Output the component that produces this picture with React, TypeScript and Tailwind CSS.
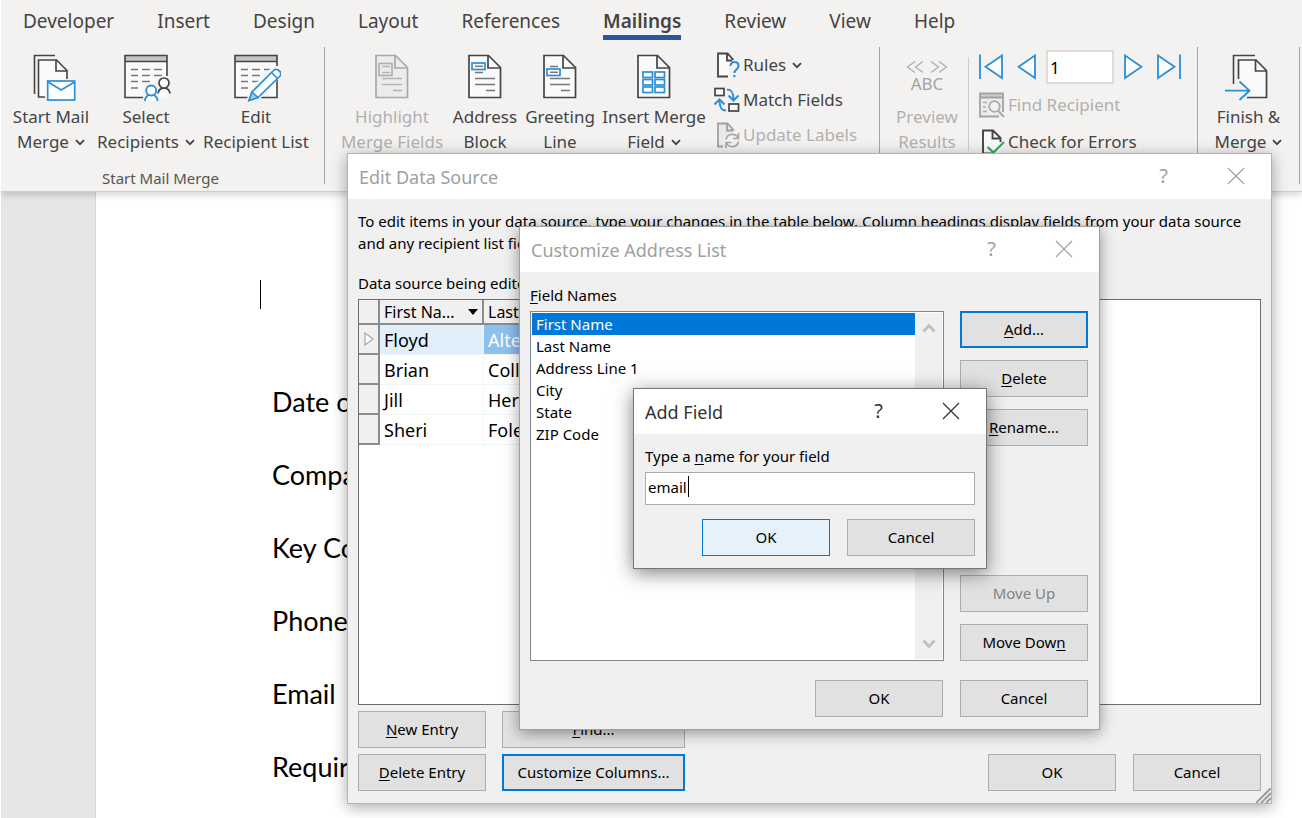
import React from "react";

const INK = "#444444";
const BLUE = "#2b8fd6";
const DIM = "#b1b0af";

function Chevron() {
  return (
    <svg width="10" height="7" viewBox="0 0 10 7" className="mb-0.5 ml-1.5 inline-block align-middle" aria-hidden="true">
      <path d="M1 1.2 L5 5.2 L9 1.2" fill="none" stroke={INK} strokeWidth="1.8" />
    </svg>
  );
}

function StartMergeIcon() {
  return (
    <svg width="52" height="48" viewBox="-8 0 52 48" aria-hidden="true">
      <path d="M1.5 40 V1.5 H22" fill="none" stroke={INK} strokeWidth="1.6" />
      <path d="M5.5 43 V6 H23.5 L34 16.5 V26 H14 V43 Z" fill="#fafafa" />
      <path d="M12 43 H5.5 V6 H23.5 L34 16.5 V25 M23 6 V17 H34" fill="none" stroke={INK} strokeWidth="1.6" />
      <rect x="14.7" y="27" width="27" height="19" fill="#fff" stroke={BLUE} strokeWidth="1.7" />
      <path d="M15 28 L28.2 36 L41.5 28" fill="none" stroke={BLUE} strokeWidth="1.7" />
    </svg>
  );
}

function SheetBase() {
  return (
    <>
      <rect x="2" y="1.5" width="42" height="42" fill="#fafafa" />
      <rect x="2" y="1.5" width="42" height="6" fill="#c3c3c3" />
      <path d="M2 7.5 H44" stroke={INK} strokeWidth="1.6" />
      <path
        d="M8 15.5 h7 M19 15.5 h8 M31 15.5 h8 M8 21.5 h7 M19 21.5 h8 M31 21.5 h8 M8 27.5 h7 M19 27.5 h8 M8 34 h7"
        stroke="#777"
        strokeWidth="1.5"
      />
    </>
  );
}

function RecipientsIcon() {
  return (
    <svg width="50" height="48" viewBox="-2 0 50 48" aria-hidden="true">
      <SheetBase />
      <path d="M44 22 V1.5 H2 V43.5 H20" fill="none" stroke={INK} strokeWidth="1.6" />
      <circle cx="40.5" cy="30" r="8" fill="#f3f2f1" />
      <circle cx="28" cy="38" r="8.5" fill="#f3f2f1" />
      <g fill="#fafafa" stroke={INK} strokeWidth="1.7">
        <path d="M35 39.5 C36 32.5 46 32 47 39.5" />
        <circle cx="41" cy="29" r="5" />
      </g>
      <g fill="#fff" stroke={BLUE} strokeWidth="1.8">
        <path d="M21.8 47 C23 38.5 33.5 38.5 34.7 47" />
        <circle cx="28.2" cy="36.5" r="5" />
      </g>
    </svg>
  );
}

function EditListIcon() {
  return (
    <svg width="50" height="48" viewBox="-2 0 50 48" aria-hidden="true">
      <SheetBase />
      <path d="M44 12 V1.5 H2 V43.5 H15 M28 43.5 H44 V25" fill="none" stroke={INK} strokeWidth="1.6" />
      <path d="M13 48 L17 35 L39 13 L48 13 L48 22 L26 46 Z" fill="#f5f5f4" />
      <path
        d="M16 46.5 L19 38 L40.5 16.5 C43 13.5 50 17.5 47 22 L25 43.5 Z"
        fill="#fff"
        stroke={BLUE}
        strokeWidth="1.7"
      />
      <path d="M16 46.5 L19 38 L25 43.5 Z" fill="#9ccbee" stroke={BLUE} strokeWidth="1.5" />
      <path d="M38.5 18.5 L44.5 24.5" stroke={BLUE} strokeWidth="1.6" />
    </svg>
  );
}

function Document({ tone, fill, children }: { tone: string; fill: string; children: React.ReactNode }) {
  return (
    <svg width="36" height="48" viewBox="0 0 36 48" aria-hidden="true">
      <path d="M2 1.5 H21.5 L33.5 13.5 V43.5 H2 Z" fill={fill} stroke={tone} strokeWidth="1.7" />
      <path d="M21 1.5 V14 H33.5" fill="none" stroke={tone} strokeWidth="1.7" />
      {children}
    </svg>
  );
}

function HighlightIcon() {
  return (
    <Document tone="#a8a8a8" fill="#ececec">
      <path d="M8 12.5 h8 M8 18.5 h8 M8 24.5 h20 M8 30.5 h20 M19 36.5 h9" stroke="#b4b4b4" strokeWidth="1.6" />
      <rect x="5" y="9.5" width="13" height="12" fill="none" stroke="#adadad" strokeWidth="1.6" />
    </Document>
  );
}

function AddressIcon() {
  return (
    <Document tone={INK} fill="#fafafa">
      <path d="M8 18.5 h8 M8 24.5 h20 M8 30.5 h20 M19 36.5 h9" stroke="#777" strokeWidth="1.6" />
      <rect x="5" y="9" width="13" height="6.5" fill="#fff" stroke={BLUE} strokeWidth="1.7" />
      <path d="M8 12.3 h8" stroke="#777" strokeWidth="1.5" />
    </Document>
  );
}

function GreetingIcon() {
  return (
    <Document tone={INK} fill="#fafafa">
      <path d="M8 12.5 h8 M8 24.5 h20 M8 30.5 h20 M19 36.5 h9" stroke="#777" strokeWidth="1.6" />
      <rect x="5" y="15" width="13" height="6.5" fill="#fff" stroke={BLUE} strokeWidth="1.7" />
      <path d="M8 18.3 h8" stroke="#777" strokeWidth="1.5" />
    </Document>
  );
}

function InsertFieldIcon() {
  return (
    <Document tone={INK} fill="#fafafa">
      <g fill="#fff" stroke={BLUE} strokeWidth="1.7">
        <rect x="7" y="18" width="9.5" height="5.5" />
        <rect x="19" y="18" width="9.5" height="5.5" />
        <rect x="7" y="25.5" width="9.5" height="5.5" />
        <rect x="19" y="25.5" width="9.5" height="5.5" />
        <rect x="7" y="33" width="9.5" height="5.5" />
        <rect x="19" y="33" width="9.5" height="5.5" />
      </g>
    </Document>
  );
}

function RulesIcon() {
  return (
    <svg width="26" height="26" viewBox="0 0 26 26" aria-hidden="true">
      <path d="M4 1.5 H13.5 L19 8 V24.5 H4 Z" fill="#fafafa" />
      <path d="M14 24.5 H4 V1.5 H13.5 L19.5 8 M13 1.5 V8.5 H18" fill="none" stroke={INK} strokeWidth="1.8" />
      <path d="M15 10 h11 v16 h-11 z" fill="#f3f2f1" />
      <path d="M16.5 14 C16.5 8.5 24.5 9 24.5 14 C24.5 17.5 20.3 17.5 20.3 21" fill="none" stroke={BLUE} strokeWidth="2" />
      <rect x="19.3" y="23" width="2.2" height="2.2" fill={BLUE} />
    </svg>
  );
}

function MatchIcon() {
  return (
    <svg width="26" height="26" viewBox="0 0 26 26" aria-hidden="true">
      <g fill="#fafafa" stroke={INK} strokeWidth="1.7">
        <rect x="1" y="1.5" width="9" height="7" />
        <rect x="15" y="17" width="9.5" height="7" />
      </g>
      <g fill="none" stroke={BLUE} strokeWidth="2">
        <path d="M13 2.5 C18 2.5 19.5 6 19.5 13 M14.5 8.5 L19.5 13.5 L24.5 8.5" />
        <path d="M12 23.5 C7 23.5 5.5 20 5.5 13 M0.5 17.5 L5.5 12.5 L10.5 17.5" />
      </g>
    </svg>
  );
}

function UpdateIcon() {
  return (
    <svg width="26" height="26" viewBox="0 0 26 26" aria-hidden="true">
      <path d="M4 1.5 H13.5 L19 8 V24.5 H4 Z" fill="#e9e9e9" />
      <path d="M9 24.5 H4 V1.5 H13.5 L20 8.5 M13 1.5 V8.5 H19" fill="none" stroke="#a0a0a0" strokeWidth="1.8" />
      <circle cx="18" cy="18.5" r="8" fill="#f3f2f1" />
      <g fill="none" stroke="#a8a8a8" strokeWidth="1.7">
        <path d="M12 17.5 C13 11.5 21.5 10.5 24 16 M24.5 11 V16.5 H19" />
        <path d="M24.5 19.5 C23.5 25.5 15 26.5 12.5 21 M12 26 V20.5 H17.5" />
      </g>
    </svg>
  );
}

function FindRecipientIcon() {
  return (
    <svg width="26" height="26" viewBox="0 0 26 26" aria-hidden="true">
      <rect x="1" y="1.5" width="23" height="23" fill="#ececec" />
      <rect x="1" y="1.5" width="23" height="4" fill="#cfcfcf" />
      <path d="M24 20 V1.5 H1 V24.5 H20 M1 5.5 H24" fill="none" stroke="#a3a3a3" strokeWidth="1.8" />
      <path d="M4 10.5 h4 M4 15 h3 M4 19.5 h4" stroke="#acacac" strokeWidth="1.5" />
      <circle cx="15.5" cy="14.5" r="5.3" fill="#f1f1f1" stroke="#a8a8a8" strokeWidth="1.7" />
      <path d="M19 18.5 L25 25" stroke="#a8a8a8" strokeWidth="1.9" />
    </svg>
  );
}

function CheckErrorsIcon() {
  return (
    <svg width="26" height="26" viewBox="0 0 26 26" aria-hidden="true">
      <path d="M4 1.5 H14 L21.5 9.5 V24.5 H4 Z" fill="#fafafa" />
      <path d="M15 24.5 H4 V1.5 H14 L21.5 9 V13 M13.5 1.5 V9.5 H21" fill="none" stroke={INK} strokeWidth="1.9" />
      <path d="M8.5 18 L14.5 23.5 L25 13" fill="none" stroke="#3aa65a" strokeWidth="2.2" />
    </svg>
  );
}

function FinishIcon() {
  return (
    <svg width="50" height="48" viewBox="0 0 50 48" aria-hidden="true">
      <path d="M9.5 30 V1.5 H31" fill="none" stroke={INK} strokeWidth="1.6" />
      <path d="M14.5 25 V6 H32 L42.5 16.5 V43.5 H22 L27 36 Z" fill="#fafafa" />
      <path d="M14.5 25 V6 H32 L42.5 16.5 V43.5 H23 M31.5 6 V17 H42.5" fill="none" stroke={INK} strokeWidth="1.7" />
      <path d="M1 36.7 H25 M15.5 27.5 L25.5 36.7 L15.5 46" fill="none" stroke={BLUE} strokeWidth="1.8" />
    </svg>
  );
}

function PreviewIcon() {
  return (
    <svg width="42" height="48" viewBox="0 0 42 48" aria-hidden="true">
      <path
        d="M9 7.5 L1.5 13 L9 18.5 M17 7.5 L9.5 13 L17 18.5 M25 7.5 L32.5 13 L25 18.5 M33 7.5 L40.5 13 L33 18.5"
        fill="none"
        stroke={DIM}
        strokeWidth="1.4"
      />
      <text x="21" y="36" textAnchor="middle" fontSize="17" fill="#a3a2a1">
        ABC
      </text>
    </svg>
  );
}

function NavArrow({ label, back, bar }: { label: string; back?: boolean; bar?: boolean }) {
  const width = bar ? 24 : 19;
  return (
    <button type="button" aria-label={label}>
      <svg width={width} height="26" viewBox={"0 0 " + width + " 26"} className={back ? "-scale-x-100" : ""} aria-hidden="true">
        <path d="M1 1.5 V24 L17.5 12.8 Z" fill="#fff" stroke={BLUE} strokeWidth="1.8" />
        {bar && <path d="M23 0.5 V25" stroke={BLUE} strokeWidth="1.8" />}
      </svg>
    </button>
  );
}

function BigButton({
  icon,
  lines,
  className,
  menu,
  disabled,
}: {
  icon: React.ReactNode;
  lines: [string, string];
  className: string;
  menu?: boolean;
  disabled?: boolean;
}) {
  return (
    <button
      type="button"
      disabled={disabled}
      className={
        "flex shrink-0 flex-col items-center pt-[7px] text-[17px] leading-[25px] whitespace-nowrap " +
        (disabled ? "text-[#b1b0af] " : "text-[#444444] ") +
        className
      }
    >
      {icon}
      <span className="mt-0.5">{lines[0]}</span>
      <span>
        {lines[1]}
        {menu && <Chevron />}
      </span>
    </button>
  );
}

function SmallButton({
  icon,
  text,
  menu,
  disabled,
}: {
  icon: React.ReactNode;
  text: string;
  menu?: boolean;
  disabled?: boolean;
}) {
  return (
    <button
      type="button"
      disabled={disabled}
      className={
        "flex h-[35px] items-center gap-[3px] text-[17px] leading-[25px] whitespace-nowrap " +
        (disabled ? "text-[#b1b0af]" : "text-[#444444]")
      }
    >
      {icon}
      <span>
        {text}
        {menu && <Chevron />}
      </span>
    </button>
  );
}

function Divider() {
  return <div className="h-[137px] w-px shrink-0 bg-[#a6a6a6]" />;
}

const tabs = ["Developer", "Insert", "Design", "Layout", "References", "Mailings", "Review", "View", "Help"];

function Ribbon() {
  return (
    <header className="relative border-b border-[#cccccc] bg-[#f3f2f1] shadow-[0_2px_8px_rgba(0,0,0,0.2)]">
      <nav className="flex gap-[43px] pl-[22px]">
        {tabs.map((t) => (
          <a
            key={t}
            href="#"
            className={
              "h-10 border-b-[5px] pt-[9px] text-[19px] leading-6 text-[#444444] " +
              (t === "Mailings" ? "border-[#2b579a] font-semibold" : "border-transparent")
            }
          >
            {t}
          </a>
        ))}
      </nav>
      <div className="mt-[7px] flex h-36">
        <section className="flex w-[323px] shrink-0 flex-col pl-1">
          <div className="flex">
            <BigButton className="w-[92px]" icon={<StartMergeIcon />} lines={["Start Mail", "Merge"]} menu />
            <BigButton className="w-[98px]" icon={<RecipientsIcon />} lines={["Select", "Recipients"]} menu />
            <BigButton className="w-[122px]" icon={<EditListIcon />} lines={["Edit", "Recipient List"]} />
          </div>
          <h2 className="mt-3.5 pr-2 text-center text-[15px] leading-5 text-[#555555]">Start Mail Merge</h2>
        </section>
        <Divider />
        <section className="flex shrink-0 pl-[9px]">
          <BigButton className="w-[116px]" icon={<HighlightIcon />} lines={["Highlight", "Merge Fields"]} disabled />
          <BigButton className="w-[70px]" icon={<AddressIcon />} lines={["Address", "Block"]} />
          <BigButton className="w-[80px]" icon={<GreetingIcon />} lines={["Greeting", "Line"]} />
          <BigButton className="w-[108px]" icon={<InsertFieldIcon />} lines={["Insert Merge", "Field"]} menu />
          <div className="ml-1.5 w-[165px]">
            <SmallButton icon={<RulesIcon />} text="Rules" menu />
            <SmallButton icon={<MatchIcon />} text="Match Fields" />
            <SmallButton icon={<UpdateIcon />} text="Update Labels" disabled />
          </div>
        </section>
        <Divider />
        <BigButton className="w-[88px] pl-1.5" icon={<PreviewIcon />} lines={["Preview", "Results"]} disabled />
        <div className="mt-2.5 h-[94px] w-px shrink-0 bg-[#cfcecd]" />
        <section className="flex w-[228px] shrink-0 flex-col gap-0.5 pt-0.5 pl-2.5">
          <div className="flex h-9 items-center">
            <NavArrow label="First record" back bar />
            <div className="ml-3.5 flex items-center gap-2.5">
              <NavArrow label="Previous record" back />
              <input
                aria-label="Record number"
                defaultValue="1"
                className="h-[34px] w-[68px] border-2 border-[#dddcdb] bg-white px-0.5 text-[17px] text-black outline-none"
              />
              <NavArrow label="Next record" />
            </div>
            <div className="ml-3.5 flex">
              <NavArrow label="Last record" bar />
            </div>
          </div>
          <SmallButton icon={<FindRecipientIcon />} text="Find Recipient" disabled />
          <SmallButton icon={<CheckErrorsIcon />} text="Check for Errors" />
        </section>
        <Divider />
        <BigButton className="w-[101px]" icon={<FinishIcon />} lines={["Finish &", "Merge"]} menu />
        <Divider />
      </div>
    </header>
  );
}

function DialogTitle({ title, active }: { title: string; active?: boolean }) {
  const tone = active ? "text-[#333333]" : "text-[#a0a0a0]";
  return (
    <div className={"flex h-[45px] items-center bg-white pl-[11px] " + tone}>
      <h2 className="flex-1 text-[18px] leading-6">{title}</h2>
      <button type="button" aria-label="Help" className="h-full w-[73px] pb-0.5 text-[20px]">
        ?
      </button>
      <button type="button" aria-label="Close" className="flex h-full w-[71px] items-center justify-center pb-0.5">
        <svg width="18" height="18" viewBox="0 0 18 18" aria-hidden="true">
          <path d="M1 1 L17 17 M17 1 L1 17" stroke="currentColor" strokeWidth="1.2" />
        </svg>
      </button>
    </div>
  );
}

function PushButton({
  children,
  look = "plain",
  wide,
  disabled,
}: {
  children: React.ReactNode;
  look?: "plain" | "focus" | "hot";
  wide?: boolean;
  disabled?: boolean;
}) {
  const looks = {
    plain: "border border-[#adadad] bg-[#e1e1e1]",
    focus: "border-2 border-[#0078d7] bg-[#e1e1e1]",
    hot: "border border-[#0078d7] bg-[#e5f1fb]",
  };
  return (
    <button
      type="button"
      disabled={disabled}
      className={
        "h-[37px] pb-0.5 text-[15px] leading-5 whitespace-nowrap " +
        looks[look] +
        (wide ? " w-[183px]" : " w-32") +
        (disabled ? " text-[#838383]" : " text-black")
      }
    >
      {children}
    </button>
  );
}

const U = ({ children }: { children: string }) => <span className="underline underline-offset-2">{children}</span>;

const people = [
  ["Floyd", "Alterman"],
  ["Brian", "Collins"],
  ["Jill", "Hernandez"],
  ["Sheri", "Foley"],
];

function EditDataSource() {
  return (
    <section
      role="dialog"
      aria-label="Edit Data Source"
      className="absolute top-[153px] left-[346px] w-[925px] border border-[#b4b4b4] bg-[#f0f0f0] shadow-[0_3px_14px_rgba(0,0,0,0.35)]"
    >
      <DialogTitle title="Edit Data Source" />
      <div className="px-2.5 pt-[11px] pb-3">
        <p className="text-[15px] leading-[22px] whitespace-nowrap text-black">
          To edit items in your data source, type your changes in the table below. Column headings display fields from your data source
          <br />
          and any recipient list fields.
        </p>
        <p className="mt-[18px] text-[15px] leading-[22px] text-black">Data source being edited:</p>
        <div className="mt-[5px] h-[406px] overflow-hidden border border-[#6b6b6b] bg-white">
          <table className="table-fixed border-separate border-spacing-0 text-left text-black">
            <colgroup>
              <col className="w-[21px]" />
              <col className="w-[104px]" />
              <col className="w-[120px]" />
            </colgroup>
            <thead>
              <tr className="h-[25px] bg-[#f0f0f0] text-[16px] leading-5">
                <th className="w-[21px] border-r-2 border-b-2 border-[#8c8c8c] p-0" aria-label="Row marker" />
                <th className="w-[104px] border-r-2 border-b-2 border-[#8c8c8c] p-0 pr-1 pl-1 font-normal">
                  <span className="flex items-center justify-between">
                    First Na...
                    <svg width="10" height="6" viewBox="0 0 10 6" aria-hidden="true">
                      <path d="M0 0 H10 L5 6 Z" fill="#000" />
                    </svg>
                  </span>
                </th>
                <th className="w-[120px] border-r-2 border-b-2 border-[#8c8c8c] p-0 pl-1 font-normal">Last Name</th>
              </tr>
            </thead>
            <tbody>
              {people.map(([first, last], i) => (
                <tr key={first} className="h-[30px] text-[18px] leading-6">
                  <td className="border-r-2 border-b-2 border-[#8c8c8c] bg-[#f0f0f0] p-0">
                    {i === 0 && (
                      <svg width="10" height="14" viewBox="0 0 10 14" className="mx-auto block" aria-hidden="true">
                        <path d="M1 1 L9 7 L1 13 Z" fill="#fff" stroke="#9aa9bb" strokeWidth="1.2" />
                      </svg>
                    )}
                  </td>
                  <td className={"border-r border-b border-[#f1f4f8] p-0 pl-1 " + (i === 0 ? "bg-[#e1effa]" : "bg-white")}>{first}</td>
                  <td className={"border-b border-[#f1f4f8] p-0 pl-1 " + (i === 0 ? "bg-[#8cc0ed] text-white" : "bg-white")}>{last}</td>
                </tr>
              ))}
            </tbody>
          </table>
        </div>
        <div className="mt-1.5 flex gap-4">
          <PushButton>
            <U>N</U>ew Entry
          </PushButton>
          <PushButton wide>
            <U>F</U>ind...
          </PushButton>
        </div>
        <div className="mt-1.5 flex gap-4">
          <PushButton>
            <U>D</U>elete Entry
          </PushButton>
          <PushButton wide look="focus">
            Customi<U>z</U>e Columns...
          </PushButton>
          <div className="ml-auto flex gap-[17px]">
            <PushButton>OK</PushButton>
            <PushButton>Cancel</PushButton>
          </div>
        </div>
      </div>
      <svg width="15" height="15" viewBox="0 0 15 15" className="absolute right-0 bottom-0" aria-hidden="true">
        <path d="M0 15 L15 0 M5 15 L15 5 M10 15 L15 10" stroke="#9b9b9b" strokeWidth="2" />
      </svg>
    </section>
  );
}

const fields = ["First Name", "Last Name", "Address Line 1", "City", "State", "ZIP Code"];

function ScrollArrow({ down }: { down?: boolean }) {
  return (
    <svg width="14" height="10" viewBox="0 0 14 10" aria-hidden="true" className={down ? "rotate-180" : ""}>
      <path d="M1.5 8.5 L7 2.5 L12.5 8.5" fill="none" stroke="#bfbfbf" strokeWidth="2.8" />
    </svg>
  );
}

function CustomizeAddressList() {
  return (
    <section
      role="dialog"
      aria-label="Customize Address List"
      className="absolute top-[226px] left-[518px] w-[581px] border border-[#a0a0a0] bg-[#f0f0f0] shadow-[0_3px_14px_rgba(0,0,0,0.4)]"
    >
      <DialogTitle title="Customize Address List" />
      <div className="pt-3 pr-[11px] pb-3 pl-2.5">
        <h3 id="field-names" className="mb-[5px] text-[15px] leading-[22px] text-black">
          <U>F</U>ield Names
        </h3>
        <div className="flex gap-4">
          <div className="flex h-[350px] flex-1 justify-between border border-[#828790] bg-white p-px">
            <ul role="listbox" aria-labelledby="field-names" className="flex-1">
              {fields.map((f, i) => (
                <li
                  key={f}
                  role="option"
                  aria-selected={i === 0}
                  className={"h-[22px] pl-1 text-[15px] leading-[22px] " + (i === 0 ? "bg-[#0078d7] text-white" : "text-black")}
                >
                  {f}
                </li>
              ))}
            </ul>
            <div className="flex w-[27px] flex-col items-center justify-between bg-[#f0f0f0] py-2.5">
              <ScrollArrow />
              <ScrollArrow down />
            </div>
          </div>
          <div className="flex flex-col justify-between">
            <div className="flex flex-col gap-3">
              <PushButton look="focus">
                <U>A</U>dd...
              </PushButton>
              <PushButton>
                <U>D</U>elete
              </PushButton>
              <PushButton>
                <U>R</U>ename...
              </PushButton>
            </div>
            <div className="flex flex-col gap-3">
              <PushButton disabled>Move Up</PushButton>
              <PushButton>
                Move Dow<U>n</U>
              </PushButton>
            </div>
          </div>
        </div>
        <div className="mt-[19px] flex justify-end gap-[17px]">
          <PushButton>OK</PushButton>
          <PushButton>Cancel</PushButton>
        </div>
      </div>
    </section>
  );
}

function AddField() {
  return (
    <section
      role="dialog"
      aria-label="Add Field"
      className="absolute top-[388px] left-[632px] w-[354px] border border-[#777777] bg-[#f0f0f0] shadow-[0_4px_18px_rgba(0,0,0,0.5)]"
    >
      <DialogTitle title="Add Field" active />
      <div className="px-[11px] pt-[11px] pb-3">
        <label htmlFor="field-name" className="block text-[15px] leading-[22px] text-black">
          Type a <U>n</U>ame for your field
        </label>
        <div className="relative mt-[5px]">
          <input
            id="field-name"
            defaultValue="email"
            className="block h-[33px] w-full border border-[#abadb3] bg-white px-0.5 pb-1 text-[15px] text-black outline-none"
          />
          <span className="absolute top-1 left-[43px] h-[21px] w-px bg-black" />
        </div>
        <div className="mt-3.5 flex justify-end gap-[17px]">
          <PushButton look="hot">OK</PushButton>
          <PushButton>Cancel</PushButton>
        </div>
      </div>
    </section>
  );
}

const letterLines = ["Date of", "Company", "Key Contact", "Phone", "Email", "Required"];

export default function App() {
  return (
    <div className="relative flex min-h-screen flex-col overflow-hidden border-l border-white bg-white [font-family:'Noto_Sans','Open_Sans',sans-serif]">
      <Ribbon />
      <main className="flex flex-1 bg-[#e6e6e6]">
        <div className="w-[94px] shrink-0" />
        <article className="flex-1 border-l border-[#d4d4d4] bg-white pt-[88px] pl-[164px] text-[27px] leading-[73px] text-black [font-family:Lato,sans-serif]">
          <div className="mb-14 h-[29px] w-px bg-black" />
          {letterLines.map((line) => (
            <p key={line} className="pl-3">
              {line}
            </p>
          ))}
        </article>
      </main>
      <EditDataSource />
      <CustomizeAddressList />
      <AddField />
    </div>
  );
}
